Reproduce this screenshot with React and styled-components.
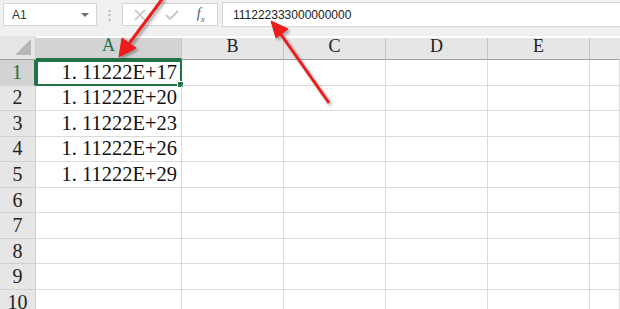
import React from 'react'
import styled, { createGlobalStyle } from 'styled-components'

const GlobalStyle = createGlobalStyle`
  html, body { margin: 0; padding: 0; background: #ffffff; }
  body { width: 620px; height: 309px; overflow: hidden; }
`

const rows = ['1.11222E+17', '1.11222E+20', '1.11222E+23', '1.11222E+26', '1.11222E+29']
const cols = ['B', 'C', 'D', 'E', '']

const Sheet = () => {
  return (
    <Page>
      <GlobalStyle />
      <Toolbar>
        <NameBox>
          <span>A1</span>
          <Caret />
        </NameBox>
        <Grip>⋮</Grip>
        <FxButtons>
          <svg width="14" height="14" viewBox="0 0 14 14">
            <path d="M2 2 L12 12 M12 2 L2 12" stroke="#c4c4c4" strokeWidth="1.6" fill="none" />
          </svg>
          <svg width="16" height="14" viewBox="0 0 16 14">
            <path d="M2 7 L6 11 L14 3" stroke="#c4c4c4" strokeWidth="1.8" fill="none" />
          </svg>
          <FxLabel>
            f<sub>x</sub>
          </FxLabel>
        </FxButtons>
        <FormulaInput>111222333000000000</FormulaInput>
      </Toolbar>
      <Grid>
        <Corner>
          <svg width="20" height="20" viewBox="0 0 20 20">
            <polygon points="18,2 18,18 2,18" fill="#b7b7b7" />
          </svg>
        </Corner>
        <ColHead $active>A</ColHead>
        {cols.map((c, i) => (
          <ColHead key={i} $last={i === cols.length - 1}>{c}</ColHead>
        ))}
        {Array.from({ length: 10 }).map((_, r) => (
          <React.Fragment key={r}>
            <RowHead $active={r === 0}>{r + 1}</RowHead>
            <Cell $selected={r === 0}>
              {rows[r] ? rows[r].replace('.', '. ') : ''}
              {r === 0 && <Handle />}
            </Cell>
            {cols.map((c, i) => (
              <Cell key={i} />
            ))}
          </React.Fragment>
        ))}
      </Grid>
      <Arrows width="620" height="309" viewBox="0 0 620 309">
        <defs>
          <filter id="sh" x="-20%" y="-20%" width="140%" height="140%">
            <feDropShadow dx="2" dy="2" stdDeviation="1.5" floodColor="#000" floodOpacity="0.35" />
          </filter>
        </defs>
        <g filter="url(#sh)" fill="#ec1c1c" stroke="#ec1c1c">
          <line x1="163" y1="-2" x2="128" y2="45" strokeWidth="3" />
          <polygon points="119,57 122,38 136,48" strokeWidth="1" />
          <line x1="329" y1="103" x2="280" y2="33" strokeWidth="3" />
          <polygon points="271,21 288,29 276,38" strokeWidth="1" />
        </g>
      </Arrows>
    </Page>
  )
}

const Page = styled.div`
  position: relative;
  width: 620px;
  height: 309px;
  overflow: hidden;
  background: #ffffff;
`

const Toolbar = styled.div`
  display: flex;
  align-items: center;
  height: 36px;
  padding: 0 0 7px 3px;
  box-sizing: border-box;
  background: #f0f0f0;
  font-family: "Liberation Sans", Arial, sans-serif;
`

const NameBox = styled.div`
  display: flex;
  align-items: center;
  justify-content: space-between;
  width: 94px;
  height: 23px;
  padding: 0 7px 0 8px;
  box-sizing: border-box;
  background: #ffffff;
  border: 1px solid #d6d6d6;
  font-size: 12px;
  color: #333333;
`

const Caret = styled.span`
  width: 0;
  height: 0;
  border-left: 4px solid transparent;
  border-right: 4px solid transparent;
  border-top: 4px solid #6f6f6f;
`

const Grip = styled.div`
  width: 25px;
  text-align: center;
  color: #a8a8a8;
  font-size: 13px;
`

const FxButtons = styled.div`
  display: flex;
  align-items: center;
  justify-content: space-around;
  width: 96px;
  height: 23px;
  box-sizing: border-box;
  background: #ffffff;
  border: 1px solid #d6d6d6;
  padding: 0 4px 0 2px;
`

const FxLabel = styled.span`
  font-family: "Liberation Serif", "Times New Roman", serif;
  font-style: italic;
  font-size: 14px;
  color: #555555;
  sub { font-size: 9px; }
`

const FormulaInput = styled.div`
  flex: 1;
  display: flex;
  align-items: center;
  height: 23px;
  margin-left: 4px;
  padding-left: 10px;
  background: #ffffff;
  border: 1px solid #d6d6d6;
  border-right: none;
  font-size: 12px;
  color: #222222;
`

const Grid = styled.div`
  display: grid;
  grid-template-columns: 36px 146px repeat(4, 102px) 30px;
  grid-template-rows: 24px repeat(10, 25.55px);
  font-family: "Liberation Serif", "DejaVu Serif", serif;
`

const Corner = styled.div`
  display: flex;
  align-items: flex-end;
  justify-content: flex-end;
  padding: 0 2px 2px 0;
  background: #e6e6e6;
  border-right: 1px solid #cfcfcf;
  border-bottom: 1px solid #9f9f9f;
`

const ColHead = styled.div`
  display: flex;
  align-items: flex-end;
  justify-content: center;
  padding-bottom: 2px;
  box-sizing: border-box;
  font-size: 18px;
  color: ${p => (p.$active ? '#217346' : '#222222')};
  background: ${p => (p.$active ? '#d3d3d3' : '#e6e6e6')};
  border-right: 1px solid ${p => (p.$last ? 'transparent' : '#c6c6c6')};
  border-bottom: ${p => (p.$active ? '2px solid #217346' : '1px solid #9f9f9f')};
  margin-top: 2px;
`

const RowHead = styled.div`
  display: flex;
  align-items: center;
  justify-content: center;
  font-size: 20px;
  color: ${p => (p.$active ? '#217346' : '#222222')};
  background: ${p => (p.$active ? '#d3d3d3' : '#e6e6e6')};
  border-right: ${p => (p.$active ? '2px solid #217346' : '1px solid #cfcfcf')};
  border-bottom: 1px solid #d0d0d0;
`

const Cell = styled.div`
  position: relative;
  display: flex;
  align-items: center;
  justify-content: flex-end;
  padding-right: 4px;
  box-sizing: border-box;
  font-size: 20.5px;
  letter-spacing: 0;
  color: #111111;
  white-space: nowrap;
  border-right: 1px solid #dadada;
  border-bottom: 1px solid #dadada;
  ${p => p.$selected && `
    outline: 2px solid #217346;
    outline-offset: -2px;
  `}
`

const Handle = styled.span`
  position: absolute;
  right: -3px;
  bottom: -3px;
  width: 5px;
  height: 5px;
  background: #217346;
  border: 1px solid #ffffff;
`

const Arrows = styled.svg`
  position: absolute;
  left: 0;
  top: 0;
  pointer-events: none;
`

export default Sheet
